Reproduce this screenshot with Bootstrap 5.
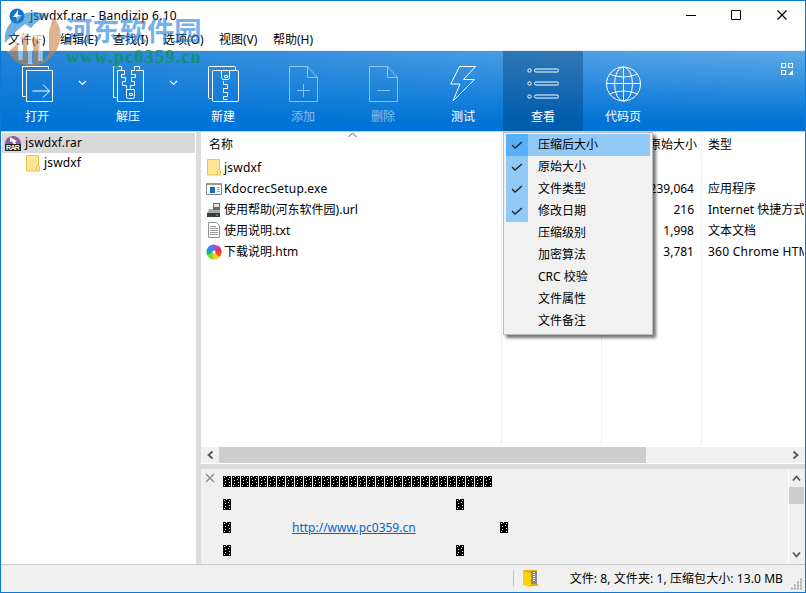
<!DOCTYPE html>
<html lang="zh-CN">
<head>
<meta charset="utf-8">
<meta name="viewport" content="width=device-width, initial-scale=1">
<title>jswdxf.rar - Bandizip 6.10</title>
<link href="https://cdn.jsdelivr.net/npm/bootstrap@5.3.0/dist/css/bootstrap.min.css" rel="stylesheet">
<style>
body{font:12px/20px "Noto Sans","Noto Sans CJK SC",sans-serif;color:#000;background:#fff;overflow:hidden}
svg{display:block;flex:none}
.win{width:806px;height:593px;border:1px solid #0f78d2}
.titlebar{height:29px;padding-left:8px}
.titlebar .caption{margin-left:5px;letter-spacing:.22px}
.winbtn{width:46px;height:29px}
.menus{height:21px;padding-left:7px;border-bottom:1px solid #ececec;line-height:20px}
.menus a{color:#000;text-decoration:none;width:53px;white-space:nowrap}
.menus a:first-child{width:52px}
.menus a:nth-child(3){width:50px}
.menus a:nth-child(4){width:56px}
.menus a:nth-child(5){width:54px}
.tools{height:81px;border-bottom:1px solid #c4cdd5;background:linear-gradient(to bottom,rgba(0,116,214,0),#0074d6 88%),linear-gradient(to right,#2584d9,#5faae8)}
.tool{width:80px;height:80px;padding-top:15px;color:#fff}
.tool svg{stroke:#fff;fill:none}
.tool span{margin-top:5px;line-height:20px;white-space:nowrap}
.tool.wide{width:72px}
.tool.off{opacity:.5}
.tool.off svg{margin-left:2px}
.tool.open{background:rgba(0,50,95,.35)}
.drop{width:19px;padding-top:27px}
.side{width:195px;padding:1px 1px 0}
.node{height:20px;padding-left:3px;letter-spacing:.15px}
.node.on{background:#d9d9d9}
.split{background:#dcdcdc}
.split-v{width:5px}
.split-h{height:5px}
.files{height:313px;background:linear-gradient(#e7f1fb,#e7f1fb) 300px 0/1px 100% no-repeat,linear-gradient(#e7f1fb,#e7f1fb) 400px 0/1px 100% no-repeat,linear-gradient(#e7f1fb,#e7f1fb) 500px 0/1px 100% no-repeat}
.line{display:grid;grid-template-columns:301px 100px 100px 102px;height:21px;line-height:21px;white-space:nowrap}
.line.head{height:25px;line-height:25px}
.line>*{overflow:hidden}
.c-name{padding-left:5px}
.c-name.latin{letter-spacing:.2px}
.c-num{text-align:right;padding-right:8px}
.head .c-num{padding-right:5px}
.c-type{padding-left:6px}
.c-type.latin{letter-spacing:.25px}
.c-name svg{margin-right:2px}
.hbar{height:17px;background:#f0f0f0;border-bottom:1px solid #fff}
.thumb{background:#cdcdcd}
.hthumb{width:427px}
.vthumb{height:17px;width:15px}
.note{background:#f0f0f0;height:95px}
.note .body{padding:1px 0 0 6px}
.noterow{height:23px;line-height:23px}
.vbar{width:17px;border-left:1px solid #fff}
.weblink{color:#0066cc;margin-left:61px;width:124px}
.lastglyph{margin-left:84px}
.status{height:28px;border-top:1px solid #cbcbcb;background:#f0f0f0}
.status .sep{width:1px;height:17px;background:#c6c6c6}
.total{margin-left:31px;letter-spacing:.08px}
.popup{position:absolute;left:503px;top:132px;width:150px;height:203px;background:#f1f1f1;border:1px solid #bdbdbd;padding:1px 2px;box-shadow:3px 3px 3px rgba(0,0,0,.55);z-index:5}
.opt{height:22px;line-height:22px}
.opt .tick{width:22px;height:22px;margin-right:10px}
.opt.sel .tick{background:#91c9f7}
.opt.hot{background:#91c9f7}
.opt.hot .tick{background:#56b0fa}
.wm{position:absolute;z-index:6;pointer-events:none;white-space:nowrap}
.wm-name{left:65px;top:12px;font:bold 27.3px/34px "Noto Sans CJK SC",sans-serif;color:rgba(24,126,222,.62)}
.wm-url{left:66px;top:46px;font:bold 18px/22px "Liberation Serif",serif;letter-spacing:1.3px;color:rgba(12,144,82,.8)}
.wm-logo{left:3px;top:10px}
.sort{position:absolute;left:147px;top:0}
</style>
<script src="https://cdn.jsdelivr.net/npm/bootstrap@5.3.0/dist/js/bootstrap.bundle.min.js"></script>
</head>
<body>
<svg width="0" height="0" class="position-absolute">
<defs>
<symbol id="folder" viewBox="0 0 14 17"><path d="M.5.5h12v10l1 1v4.500H.5z" fill="#ffe596" stroke="#e9c24c"/><path d="M10.500 15.500v-4l2-1.500" fill="none" stroke="#e9c24c"/></symbol>
<pattern id="glyphs" width="9" height="11" patternUnits="userSpaceOnUse"><path d="M0 0h8v11H0z" fill="#000"/><path d="M1 1h1v1H1zM6 1h1v1H6zM5 3h1v1H5zM2 4h1v1H2zM2 7h1v1H2zM6 6h1v1H6zM1 9h1v1H1zM6 9h1v1H6zM3 0h1v1H3z" fill="#f0f0f0"/></pattern>
</defs>
</svg>
<div class="win position-relative d-flex flex-column">
  <header class="titlebar d-flex align-items-center">
    <svg width="16" height="16" viewBox="0 0 16 16"><circle cx="8" cy="8" r="7.500" fill="#0d73d3"/><path d="M9 2 4 9h3l1 5 5-7H9z" fill="#fff"/></svg>
    <span class="caption">jswdxf.rar - Bandizip 6.10</span>
    <div class="d-flex ms-auto">
      <svg class="winbtn" viewBox="0 0 46 29"><path d="M19 14.500h10" stroke="#000"/></svg>
      <svg class="winbtn" viewBox="0 0 46 29"><path d="M18.500 9.500h9v9h-9z" stroke="#000" fill="none"/></svg>
      <svg class="winbtn" viewBox="0 0 46 29"><path d="M18.500 9.500l9 9m0-9-9 9" stroke="#000" stroke-width="1.200"/></svg>
    </div>
  </header>
  <nav class="menus d-flex"><a href="#">文件(F)</a><a href="#">编辑(E)</a><a href="#">查找(I)</a><a href="#">选项(O)</a><a href="#">视图(V)</a><a href="#">帮助(H)</a></nav>

  <div class="tools d-flex">
    <div class="tool wide d-flex flex-column align-items-center">
      <svg width="32" height="36"><path d="M4.500 30.500h-3V.500h26v3M5.500 4.500h26v31h-26zM11.500 25h17m-6.500-6.500 6.500 6.500-6.500 6.500"/></svg><span>打开</span></div>
    <div class="drop"><svg width="19" height="10"><path d="m6 3 3.500 3.500L13 3" fill="none" stroke="#fff" stroke-width="1.200"/></svg></div>
    <div class="tool wide d-flex flex-column align-items-center">
      <svg width="32" height="36"><path d="M4.500 31.500h-3V.500h8v4h3v4h-3v3h4v4h-3v4h4v3M27.500 3.500v-3h-5v4h-3v4h4v3h-4v4h3v4h-4v3M9 4.500H5.500v31h26v-31H24M14.500 23.500h8v7q0 2-2 2h-4q-2 0-2-2zM17.500 27.500h3v2h-3z"/></svg><span>解压</span></div>
    <div class="drop"><svg width="19" height="10"><path d="m6 3 3.500 3.500L13 3" fill="none" stroke="#fff" stroke-width="1.200"/></svg></div>
    <div class="tool d-flex flex-column align-items-center">
      <svg width="32" height="36"><path d="M4.500 32.500H2.500q-1 0-1-1V1.500q0-1 1-1h25q1 0 1 1v3M6.500 4.500h24q1 0 1 1v29q0 1-1 1h-24q-1 0-1-1v-29q0-1 1-1zM14.500 4.500v7q0 2 2 2h4q2 0 2-2v-7M17.500 9.500h3v2h-3zM16.500 15v3.500h4v4h-4v4h4v4h-4v3h4"/></svg><span>新建</span></div>
    <div class="tool off d-flex flex-column align-items-center">
      <svg width="30" height="36"><path d="M.5.500h18l10 11v24H.5zM18.500.500v11h10M8 24.500h13M14.500 18v13"/></svg><span>添加</span></div>
    <div class="tool off d-flex flex-column align-items-center">
      <svg width="30" height="36"><path d="M.5.500h18l10 11v24H.5zM18.500.500v11h10M8 24.500h13"/></svg><span>删除</span></div>
    <div class="tool d-flex flex-column align-items-center">
      <svg width="26" height="36"><path d="M9.500.500h16l-12 13h11L3 35l7-17H.8z"/></svg><span>测试</span></div>
    <div class="tool open d-flex flex-column align-items-center">
      <svg width="32" height="36"><circle cx="2.500" cy="4.500" r="1.700"/><circle cx="2.500" cy="17.500" r="1.700"/><circle cx="2.500" cy="30.500" r="1.700"/><rect x="7.500" y="3" width="24" height="3" rx="1.500"/><rect x="7.500" y="16" width="24" height="3" rx="1.500"/><rect x="7.500" y="29" width="24" height="3" rx="1.500"/></svg><span>查看</span></div>
    <div class="tool d-flex flex-column align-items-center">
      <svg width="36" height="36"><circle cx="18.500" cy="18" r="17"/><ellipse cx="18.500" cy="18" rx="9" ry="17"/><path d="M18.500 1v34M1 17.500h34M4 8q14.500 6 29 0M4 28q14.500-6 29 0"/></svg><span>代码页</span></div>
    <svg class="ms-auto me-2 pe-1" width="16" height="28"><g fill="none" stroke="#fff" stroke-width="1.200"><path d="M.6 12.500h4v4h-4zM7.600 12.500h4v4h-4zM.6 19.500h4v4h-4z"/></g><path d="M12 19v5H7z" fill="#fff"/></svg>
  </div>

  <main class="d-flex flex-grow-1">
    <aside class="side">
      <div class="node on d-flex align-items-center"><svg width="16" height="16"><path d="M0 9a8 8 0 0 1 16 0z" fill="#8f57a4"/><path d="m5 2 7 4-2 1 2 3H9L7 6 5 7z" fill="#fff"/><path d="M0 9h16v7H0z" fill="#222"/><text x="8" y="15.200" text-anchor="middle" textLength="14" font-family="Liberation Sans" font-size="7" font-weight="bold" fill="#fff">RAR</text></svg><span class="ms-1">jswdxf.rar</span></div>
      <div class="node ps-4 d-flex align-items-center"><svg width="14" height="17"><use href="#folder"/></svg><span class="ms-1">jswdxf</span></div>
    </aside>
    <div class="split split-v"></div>
    <section class="flex-grow-1 d-flex flex-column">
      <div class="files position-relative">
        <svg class="sort" width="9" height="6"><path d="m.5 5 4-4 4 4" fill="none" stroke="#555"/></svg>
        <div class="line head"><span class="c-name ps-2">名称</span><span></span><span class="c-num">原始大小</span><span class="c-type">类型</span></div>
        <div class="line"><span class="c-name latin d-flex align-items-center"><svg width="16" height="17"><use href="#folder" x="1" width="14" height="17"/></svg>jswdxf</span></div>
        <div class="line"><span class="c-name latin d-flex align-items-center"><svg width="16" height="14"><path d="M.5 1.500h15v11H.5z" fill="#fff" stroke="#858585"/><path d="M1 1h14v2H1z" fill="#999"/><path d="M4 5h5v6H4z" fill="#0873ce"/><path d="M11 5.500h3m-3 2h3m-3 2h3" stroke="#9aa"/></svg>KdocrecSetup.exe</span><span></span><span class="c-num">13,239,064</span><span class="c-type">应用程序</span></div>
        <div class="line"><span class="c-name d-flex align-items-center"><svg width="16" height="16"><path d="M7 1h7v8H7z" fill="#656970"/><path d="M8 2h5v3H8z" fill="#e7e7e7"/><path d="m3 7-2 4h13V8H7V7z" fill="#a9acaf"/><path d="M1 11h13v4H1z" fill="#3c3d40"/><path d="M10 13h2" stroke="#52e34c"/></svg>使用帮助(河东软件园).url</span><span></span><span class="c-num">216</span><span class="c-type">Internet 快捷方式</span></div>
        <div class="line"><span class="c-name d-flex align-items-center"><svg width="16" height="17"><path d="M2.500.500h8l3 3v12h-11z" fill="#fff" stroke="#929292"/><path d="M4 4.500h6m-6 2h8m-8 2h8m-8 2h8m-8 2h8" stroke="#999"/></svg>使用说明.txt</span><span></span><span class="c-num">1,998</span><span class="c-type">文本文档</span></div>
        <div class="line"><span class="c-name d-flex align-items-center"><svg width="16" height="16" viewBox="-8 -8 16 16"><path d="M0 0-3-7A7.500 7.500 0 0 1 4-6z" fill="#8c55ea"/><path d="M0 0 4-6.500A7.500 7.500 0 0 1 7.500 0z" fill="#e0336c"/><path d="M0 0 7.500-1A7.500 7.500 0 0 1 5 5.500z" fill="#fb4a22"/><path d="M0 0 5.500 5A7.500 7.500 0 0 1-1 7.500z" fill="#ffc91c"/><path d="M0 0-1 7.500A7.500 7.500 0 0 1-6.500 3.500z" fill="#7edb1d"/><path d="M0 0-6.500 3.500A7.500 7.500 0 0 1-7-3z" fill="#16bb78"/><path d="M0 0-7.200-2A7.500 7.500 0 0 1-2-7.200z" fill="#3486f5"/><circle r="1.500" fill="#fff"/></svg>下载说明.htm</span><span></span><span class="c-num">3,781</span><span class="c-type latin">360 Chrome HTML</span></div>
      </div>
      <div class="hbar d-flex mt-auto">
        <svg width="18" height="16"><path d="m11.500 4.500-4 3.500 4 3.500" fill="none" stroke="#555" stroke-width="1.800"/></svg>
        <div class="thumb hthumb"></div>
        <svg class="ms-auto me-1" width="14" height="16"><path d="m6.500 4.500 4 3.500-4 3.500" fill="none" stroke="#555" stroke-width="1.800"/></svg>
      </div>
      <div class="split split-h"></div>
      <div class="note d-flex">
        <svg width="16" height="18"><path d="m5 5 8 8m0-8-8 8" stroke="#858585" stroke-width="1.200"/></svg>
        <div class="body flex-grow-1">
          <div class="noterow d-flex align-items-center"><svg width="269" height="11"><rect width="269" height="11" fill="url(#glyphs)"/></svg></div>
          <div class="noterow d-flex align-items-center"><svg width="242" height="11"><rect width="8" height="11" fill="url(#glyphs)"/><g transform="translate(233)"><rect width="8" height="11" fill="url(#glyphs)"/></g></svg></div>
          <div class="noterow d-flex align-items-center"><svg width="8" height="11"><rect width="8" height="11" fill="url(#glyphs)"/></svg><a class="weblink" href="#">http://www.pc0359.cn</a><svg class="lastglyph" width="8" height="11"><rect width="8" height="11" fill="url(#glyphs)"/></svg></div>
          <div class="noterow d-flex align-items-center"><svg width="242" height="11"><rect width="8" height="11" fill="url(#glyphs)"/><g transform="translate(233)"><rect width="8" height="11" fill="url(#glyphs)"/></g></svg></div>
        </div>
        <div class="vbar d-flex flex-column">
          <svg width="16" height="18"><path d="m4 11.500 3.500-4 3.500 4" fill="none" stroke="#555" stroke-width="1.800"/></svg>
          <div class="thumb vthumb"></div>
          <svg class="mt-auto" width="16" height="18"><path d="m4 6.500 3.500 4 3.500-4" fill="none" stroke="#555" stroke-width="1.800"/></svg>
        </div>
      </div>
    </section>
  </main>

  <footer class="status d-flex align-items-center justify-content-end">
    <div class="sep"></div>
    <svg class="ms-2" width="17" height="17"><path d="M1 0h14v14h1v2H7z" fill="#efaa10"/><path d="M9 1h6v13H9z" fill="#888"/><path d="M12 2v10" stroke="#fff" stroke-width="2" stroke-dasharray="1 1"/><path d="m1 1 8 2v14l-8-2z" fill="#ffd000"/></svg>
    <span class="total">文件: 8, 文件夹: 1, 压缩包大小: 13.0 MB</span>
    <svg class="align-self-end" width="22" height="17"><path d="M17 4.500h2M14 7.500h2m1 0h2M11 10.500h2m1 0h2m1 0h2M8 13.500h2m1 0h2m1 0h2m1 0h2" stroke="#aaa" stroke-width="2"/></svg>
  </footer>
</div>

<div class="popup">
  <div class="opt sel hot d-flex"><svg class="tick" viewBox="0 0 22 22"><path d="m6 11 3 3 7-6" fill="none" stroke="#222" stroke-width="1.300"/></svg>压缩后大小</div>
  <div class="opt sel d-flex"><svg class="tick" viewBox="0 0 22 22"><path d="m6 11 3 3 7-6" fill="none" stroke="#222" stroke-width="1.300"/></svg>原始大小</div>
  <div class="opt sel d-flex"><svg class="tick" viewBox="0 0 22 22"><path d="m6 11 3 3 7-6" fill="none" stroke="#222" stroke-width="1.300"/></svg>文件类型</div>
  <div class="opt sel d-flex"><svg class="tick" viewBox="0 0 22 22"><path d="m6 11 3 3 7-6" fill="none" stroke="#222" stroke-width="1.300"/></svg>修改日期</div>
  <div class="opt d-flex"><span class="tick"></span>压缩级别</div>
  <div class="opt d-flex"><span class="tick"></span>加密算法</div>
  <div class="opt d-flex"><span class="tick"></span>CRC 校验</div>
  <div class="opt d-flex"><span class="tick"></span>文件属性</div>
  <div class="opt d-flex"><span class="tick"></span>文件备注</div>
</div>

<svg class="wm wm-logo" width="60" height="58" viewBox="0 0 60 58">
  <path d="M2 33C-1 10 25-6 46 6Q36 8 28 18L22 14Q13 21 2 33z" fill="#1680c9" opacity=".62"/>
  <path d="M50 7Q61 19 56 34 49 54 30 56 12 56 5 42L15 32V50h5V27l4-4V53h6V24l7 7V52q6-3 9-9V22z" fill="#c8834a" opacity=".62"/>
  <path d="M3 38Q15 30 25 19l8 7Q38 12 51 8 42 17 38 33L26 23Q15 33 5 42z" fill="#fff" opacity=".7"/>
  <path d="M17.500 33v17M27 26v28M37.500 33v18" stroke="#fff" stroke-width="4.500" opacity=".5"/>
</svg>
<div class="wm wm-name">河东软件园</div>
<div class="wm wm-url">www.pc0359.cn</div>
</body>
</html>
